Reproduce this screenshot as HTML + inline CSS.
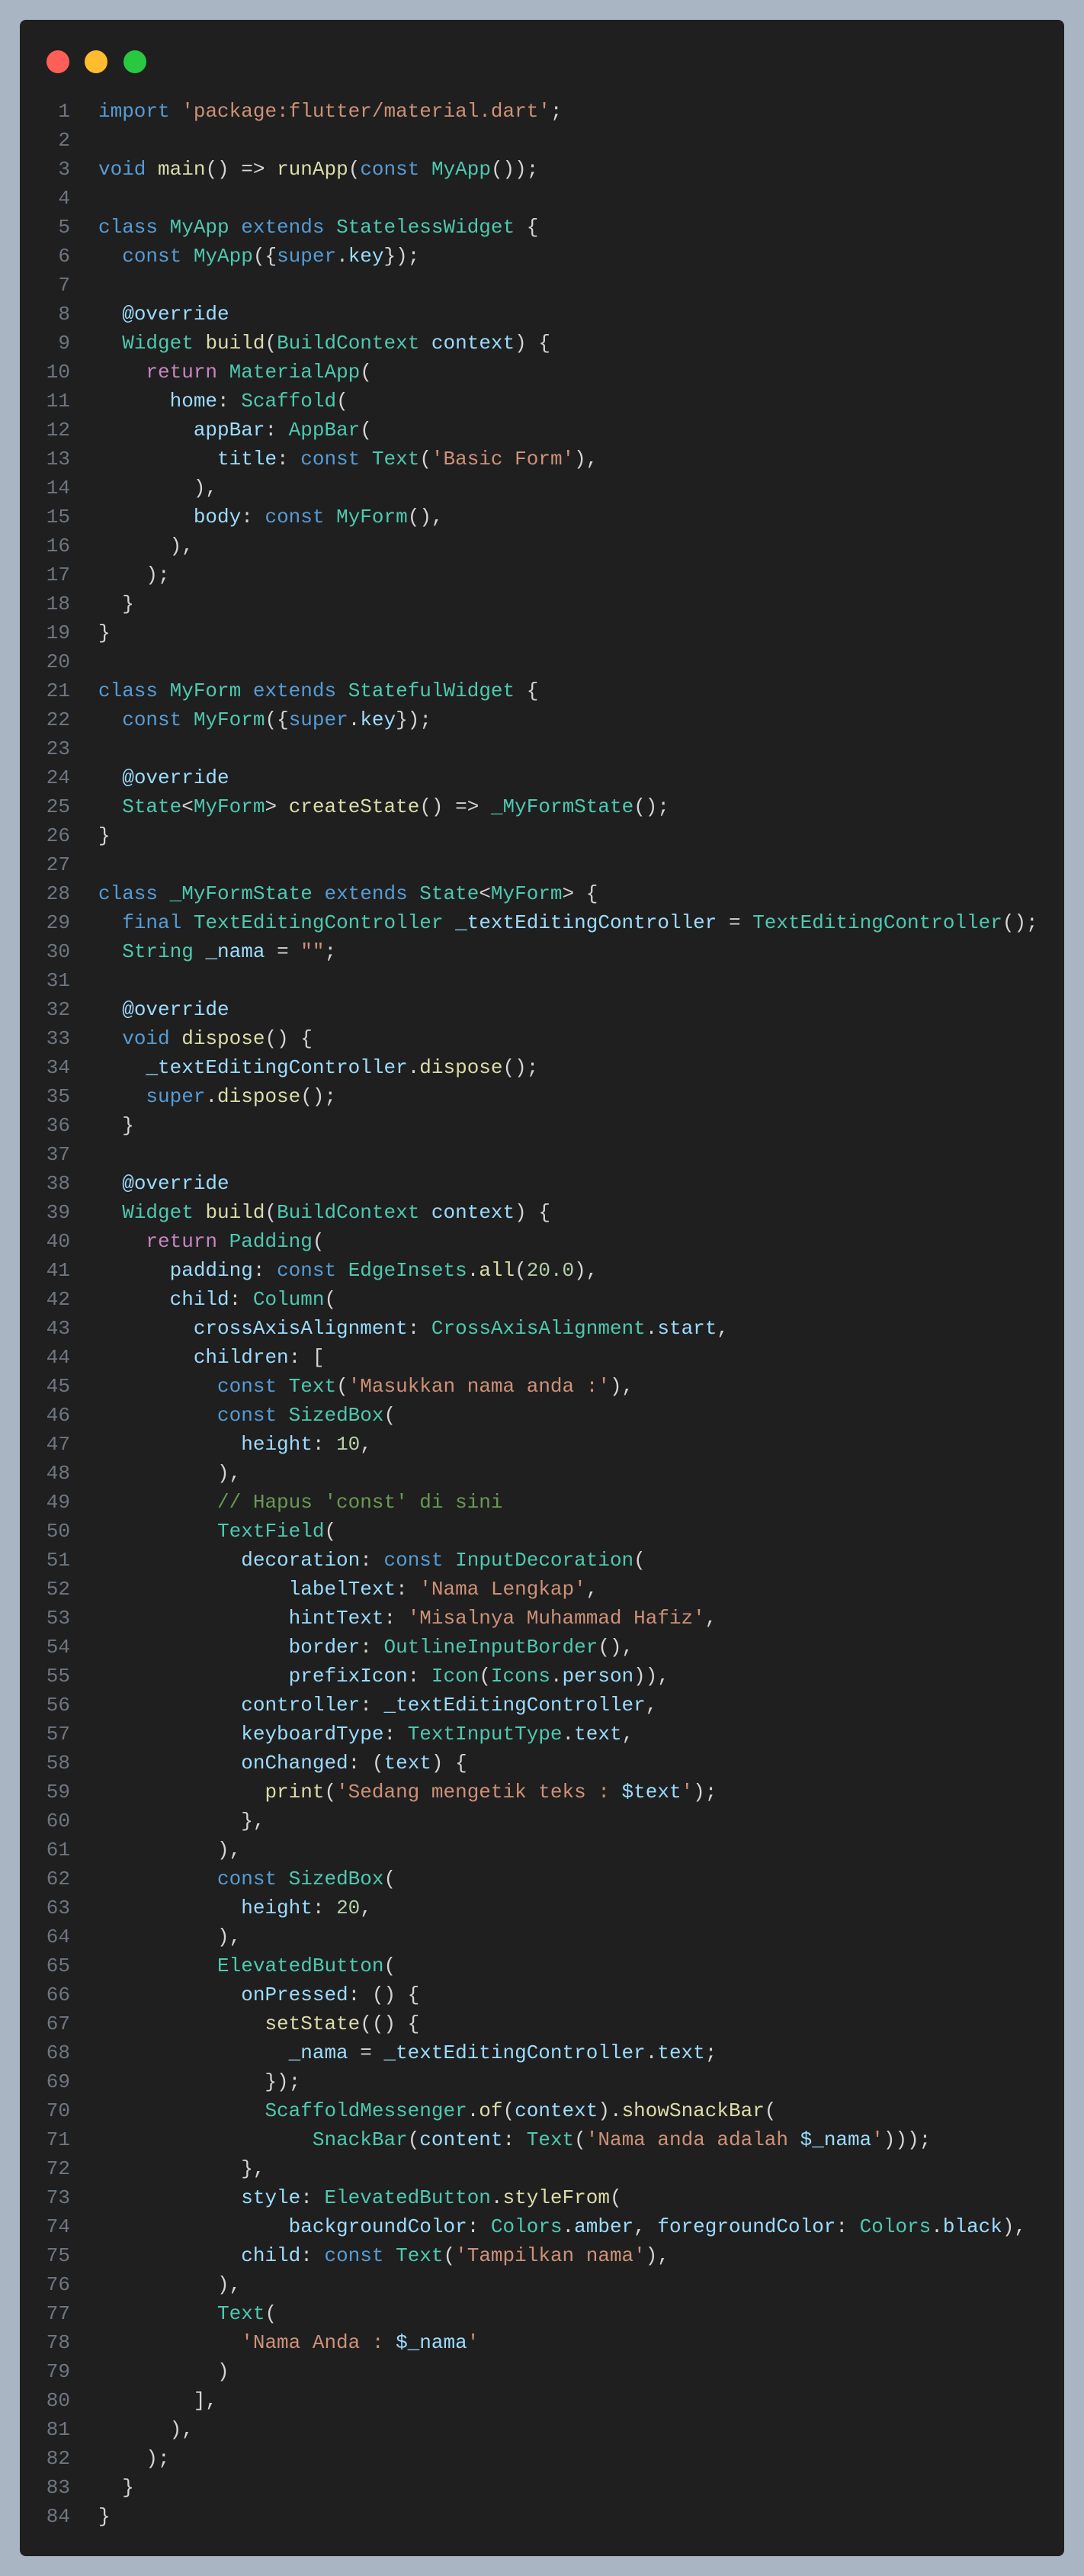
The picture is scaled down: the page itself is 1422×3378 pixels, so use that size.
<!DOCTYPE html>
<html><head><meta charset="utf-8"><style>
html,body{margin:0;padding:0;background:#a9b5c2;width:1422px;height:3378px;overflow:hidden}
.win{position:absolute;left:26px;top:26px;width:1370px;height:3326px;background:#1f1f1f;border-radius:8px}
.dot{position:absolute;top:66px;width:30px;height:30px;border-radius:50%}
pre{position:absolute;top:127px;margin:0;font-family:"Liberation Mono",monospace;font-size:26px;line-height:38px;color:#d4d4d4;white-space:pre}
.ln{left:40px;width:52px;text-align:right;color:#6e7681}
.code{left:129px}
.k{color:#569cd6}.c{color:#c586c0}.t{color:#4ec9b0}.f{color:#dcdcaa}.s{color:#ce9178}.v{color:#9cdcfe}.n{color:#b5cea8}.m{color:#6a9955}
</style></head><body>
<div class="win"></div>
<div class="dot" style="left:61px;background:#ff5f57"></div>
<div class="dot" style="left:111px;background:#febc2e"></div>
<div class="dot" style="left:162px;background:#28c840"></div>
<pre class="ln">1
2
3
4
5
6
7
8
9
10
11
12
13
14
15
16
17
18
19
20
21
22
23
24
25
26
27
28
29
30
31
32
33
34
35
36
37
38
39
40
41
42
43
44
45
46
47
48
49
50
51
52
53
54
55
56
57
58
59
60
61
62
63
64
65
66
67
68
69
70
71
72
73
74
75
76
77
78
79
80
81
82
83
84</pre>
<pre class="code"><span class="k">import</span> <span class="s">'package:flutter/material.dart'</span>;

<span class="k">void</span> <span class="f">main</span>() =&gt; <span class="f">runApp</span>(<span class="k">const</span> <span class="t">MyApp</span>());

<span class="k">class</span> <span class="t">MyApp</span> <span class="k">extends</span> <span class="t">StatelessWidget</span> {
  <span class="k">const</span> <span class="t">MyApp</span>({<span class="k">super</span>.<span class="v">key</span>});

  <span class="v">@override</span>
  <span class="t">Widget</span> <span class="f">build</span>(<span class="t">BuildContext</span> <span class="v">context</span>) {
    <span class="c">return</span> <span class="t">MaterialApp</span>(
      <span class="v">home</span>: <span class="t">Scaffold</span>(
        <span class="v">appBar</span>: <span class="t">AppBar</span>(
          <span class="v">title</span>: <span class="k">const</span> <span class="t">Text</span>(<span class="s">'Basic Form'</span>),
        ),
        <span class="v">body</span>: <span class="k">const</span> <span class="t">MyForm</span>(),
      ),
    );
  }
}

<span class="k">class</span> <span class="t">MyForm</span> <span class="k">extends</span> <span class="t">StatefulWidget</span> {
  <span class="k">const</span> <span class="t">MyForm</span>({<span class="k">super</span>.<span class="v">key</span>});

  <span class="v">@override</span>
  <span class="t">State</span>&lt;<span class="t">MyForm</span>&gt; <span class="f">createState</span>() =&gt; <span class="t">_MyFormState</span>();
}

<span class="k">class</span> <span class="t">_MyFormState</span> <span class="k">extends</span> <span class="t">State</span>&lt;<span class="t">MyForm</span>&gt; {
  <span class="k">final</span> <span class="t">TextEditingController</span> <span class="v">_textEditingController</span> = <span class="t">TextEditingController</span>();
  <span class="t">String</span> <span class="v">_nama</span> = <span class="s">""</span>;

  <span class="v">@override</span>
  <span class="k">void</span> <span class="f">dispose</span>() {
    <span class="v">_textEditingController</span>.<span class="f">dispose</span>();
    <span class="k">super</span>.<span class="f">dispose</span>();
  }

  <span class="v">@override</span>
  <span class="t">Widget</span> <span class="f">build</span>(<span class="t">BuildContext</span> <span class="v">context</span>) {
    <span class="c">return</span> <span class="t">Padding</span>(
      <span class="v">padding</span>: <span class="k">const</span> <span class="t">EdgeInsets</span>.<span class="f">all</span>(<span class="n">20.0</span>),
      <span class="v">child</span>: <span class="t">Column</span>(
        <span class="v">crossAxisAlignment</span>: <span class="t">CrossAxisAlignment</span>.<span class="v">start</span>,
        <span class="v">children</span>: [
          <span class="k">const</span> <span class="t">Text</span>(<span class="s">'Masukkan nama anda :'</span>),
          <span class="k">const</span> <span class="t">SizedBox</span>(
            <span class="v">height</span>: <span class="n">10</span>,
          ),
          <span class="m">// Hapus 'const' di sini</span>
          <span class="t">TextField</span>(
            <span class="v">decoration</span>: <span class="k">const</span> <span class="t">InputDecoration</span>(
                <span class="v">labelText</span>: <span class="s">'Nama Lengkap'</span>,
                <span class="v">hintText</span>: <span class="s">'Misalnya Muhammad Hafiz'</span>,
                <span class="v">border</span>: <span class="t">OutlineInputBorder</span>(),
                <span class="v">prefixIcon</span>: <span class="t">Icon</span>(<span class="t">Icons</span>.<span class="v">person</span>)),
            <span class="v">controller</span>: <span class="v">_textEditingController</span>,
            <span class="v">keyboardType</span>: <span class="t">TextInputType</span>.<span class="v">text</span>,
            <span class="v">onChanged</span>: (<span class="v">text</span>) {
              <span class="f">print</span>(<span class="s">'Sedang mengetik teks : </span><span class="v">$text</span><span class="s">'</span>);
            },
          ),
          <span class="k">const</span> <span class="t">SizedBox</span>(
            <span class="v">height</span>: <span class="n">20</span>,
          ),
          <span class="t">ElevatedButton</span>(
            <span class="v">onPressed</span>: () {
              <span class="f">setState</span>(() {
                <span class="v">_nama</span> = <span class="v">_textEditingController</span>.<span class="v">text</span>;
              });
              <span class="t">ScaffoldMessenger</span>.<span class="f">of</span>(<span class="v">context</span>).<span class="f">showSnackBar</span>(
                  <span class="t">SnackBar</span>(<span class="v">content</span>: <span class="t">Text</span>(<span class="s">'Nama anda adalah </span><span class="v">$_nama</span><span class="s">'</span>)));
            },
            <span class="v">style</span>: <span class="t">ElevatedButton</span>.<span class="f">styleFrom</span>(
                <span class="v">backgroundColor</span>: <span class="t">Colors</span>.<span class="v">amber</span>, <span class="v">foregroundColor</span>: <span class="t">Colors</span>.<span class="v">black</span>),
            <span class="v">child</span>: <span class="k">const</span> <span class="t">Text</span>(<span class="s">'Tampilkan nama'</span>),
          ),
          <span class="t">Text</span>(
            <span class="s">'Nama Anda : </span><span class="v">$_nama</span><span class="s">'</span>
          )
        ],
      ),
    );
  }
}</pre>
</body></html>
